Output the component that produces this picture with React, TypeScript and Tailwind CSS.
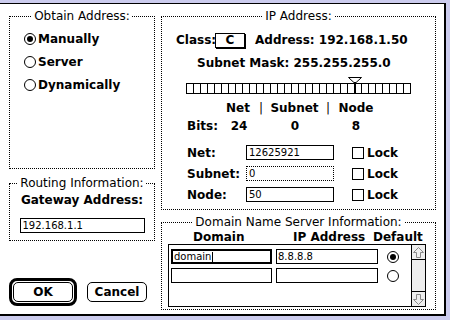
import React from "react";

function Radio({ on }: { on?: boolean }) {
  return (
    <span className="w-[12px] h-[12px] rounded-full border border-black bg-white flex items-center justify-center shrink-0">
      {on ? <span className="w-[6px] h-[6px] rounded-full bg-black" /> : null}
    </span>
  );
}

function Check() {
  return <span className="block w-[12px] h-[12px] border border-black bg-white shrink-0" />;
}

function Legend({ children }: { children: React.ReactNode }) {
  return (
    <legend className="mx-auto px-[2px] text-[12px] leading-[14px] font-normal">{children}</legend>
  );
}

function Arrow({ down }: { down?: boolean }) {
  return (
    <svg width="11" height="11" viewBox="0 0 11 11" className={down ? "rotate-180" : ""}>
      <path d="M5.5 0.5 L10.5 5.5 L7.5 5.5 L7.5 10.5 L3.5 10.5 L3.5 5.5 L0.5 5.5 Z" fill="none" stroke="#8a8a8a" strokeWidth="1" />
    </svg>
  );
}

export default function App() {
  const cells = Array.from({ length: 32 }, (_, i) => i);
  return (
    <div className="w-[450px] h-[320px] bg-[#ccccee] pt-[3px] pr-[4px] pb-[4px] font-['DejaVu_Sans',sans-serif] text-black">
      <div className="h-full bg-white border-t border-r-2 border-b-2 border-black flex">
        {/* Left column */}
        <div className="ml-[9px] w-[146px] flex flex-col">
          <fieldset className="mt-[5px] h-[160px] border border-dotted border-black">
            <Legend>Obtain Address:</Legend>
            <div className="pt-[4px] pl-[14px] font-bold text-[12px]">
              <div className="h-[23px] flex items-center gap-[2px]"><Radio on />Manually</div>
              <div className="h-[23px] flex items-center gap-[2px]"><Radio />Server</div>
              <div className="h-[23px] flex items-center gap-[2px]"><Radio />Dynamically</div>
            </div>
          </fieldset>
          <fieldset className="mt-[7px] h-[65px] border border-dotted border-black">
            <Legend>Routing Information:</Legend>
            <div className="mt-[3px] text-center font-bold text-[12px] leading-[14px]">Gateway Address:</div>
            <div className="mt-[11px] mx-auto w-[125px] h-[15px] border border-black text-[10px] leading-[13px] pl-[2px]">192.168.1.1</div>
          </fieldset>
          <div className="mt-[37px] flex items-center">
            <div className="w-[68px] h-[28px] border-[3px] border-black rounded-[8px] p-[1px]">
              <div className="w-full h-full border border-black rounded-[5px] flex items-center justify-center font-bold text-[12px]">OK</div>
            </div>
            <div className="ml-[10px] w-[60px] h-[20px] border border-black rounded-[5px] flex items-center justify-center font-bold text-[12px]">Cancel</div>
          </div>
        </div>

        {/* Right column */}
        <div className="ml-[6px] w-[275px] flex flex-col">
          <fieldset className="mt-[5px] h-[201px] border border-dotted border-black">
            <Legend>IP Address:</Legend>
            <div className="font-bold text-[12px] leading-[14px]">
              <div className="mt-[9px] pl-[14px] h-[16px] flex items-center">
                <span className="w-[39px]">Class:</span>
                <span className="w-[30px] h-[15px] border border-black shadow-[1px_1px_0_#000] flex items-center justify-center">C</span>
                <span className="ml-[10px]">Address: 192.168.1.50</span>
              </div>
              <div className="mt-[8px] pl-[35px] h-[14px]">Subnet Mask: 255.255.255.0</div>
              <div className="mt-[7px] ml-[24px] relative w-[225px] h-[17px]">
                <div className="absolute left-0 top-[6px] flex border-l border-y border-black h-[11px]">
                  {cells.map((i) => (
                    <span key={i} className="w-[7px] h-full border-r border-black" />
                  ))}
                </div>
                <svg className="absolute left-[162px] top-0" width="14" height="17" viewBox="0 0 14 17">
                  <path d="M0.5 0.5 L13.5 0.5 L7 6.5 Z" fill="white" stroke="black" strokeWidth="1" />
                  <rect x="6" y="5" width="2" height="12" fill="black" />
                </svg>
              </div>
              <div className="mt-[7px] h-[14px] flex">
                <span className="w-[55px]" />
                <span className="w-[42px] text-center">Net</span>
                <span className="w-[4px] text-center font-normal">|</span>
                <span className="w-[63px] text-center">Subnet</span>
                <span className="w-[4px] text-center font-normal">|</span>
                <span className="w-[52px] text-center">Node</span>
              </div>
              <div className="mt-[4px] h-[14px] flex pl-[25px]">
                <span className="w-[30px]">Bits:</span>
                <span className="w-[44px] text-center">24</span>
                <span className="w-[68px] text-center">0</span>
                <span className="w-[54px] text-center">8</span>
              </div>
              {[
                { l: "Net:", v: "12625921", dotted: false, mt: "mt-[12px]" },
                { l: "Subnet:", v: "0", dotted: true, mt: "mt-[6px]" },
                { l: "Node:", v: "50", dotted: false, mt: "mt-[6px]" },
              ].map((r) => (
                <div key={r.l} className={`${r.mt} h-[15px] flex items-center pl-[25px]`}>
                  <span className="w-[59px]">{r.l}</span>
                  <span
                    className={
                      r.dotted
                        ? "w-[88px] h-[15px] border border-dotted border-black font-normal text-[10px] leading-[13px] pl-[2px]"
                        : "w-[88px] h-[15px] border border-black font-normal text-[10px] leading-[13px] pl-[2px]"
                    }
                  >
                    {r.v}
                  </span>
                  <span className="ml-[18px]"><Check /></span>
                  <span className="ml-[3px]">Lock</span>
                </div>
              ))}
            </div>
          </fieldset>

          <fieldset className="mt-[5px] h-[95px] border border-dotted border-black">
            <Legend>Domain Name Server Information:</Legend>
            <div className="mt-[2px] h-[13px] leading-[13px] flex pl-[31px] font-bold text-[12px]">
              <span className="w-[100px]">Domain</span>
              <span className="w-[80px]">IP Address</span>
              <span>Default</span>
            </div>
            <div className="ml-[6px] w-[258px] h-[63px] border border-black flex">
              <div className="flex-1 pl-[2px] pt-[4px] flex flex-col gap-[4px] text-[10px]">
                <div className="flex items-center h-[15px]">
                  <span className="w-[101px] h-[15px] border-2 border-black leading-[11px] pl-[1px] flex items-center">
                    domain<span className="ml-[1px] w-[1px] h-[10px] bg-black" />
                  </span>
                  <span className="ml-[4px] w-[102px] h-[15px] border border-black leading-[13px] pl-[1px]">8.8.8.8</span>
                  <span className="ml-[9px]"><Radio on /></span>
                </div>
                <div className="flex items-center h-[15px]">
                  <span className="w-[101px] h-[15px] border border-black" />
                  <span className="ml-[4px] w-[102px] h-[15px] border border-black" />
                  <span className="ml-[9px]"><Radio /></span>
                </div>
              </div>
              <div className="w-[14px] border-l border-black bg-[#eeeeee] flex flex-col justify-between">
                <div className="h-[15px] border-b border-black flex items-center justify-center"><Arrow /></div>
                <div className="h-[15px] border-t border-black flex items-center justify-center"><Arrow down /></div>
              </div>
            </div>
          </fieldset>
        </div>
      </div>
    </div>
  );
}
